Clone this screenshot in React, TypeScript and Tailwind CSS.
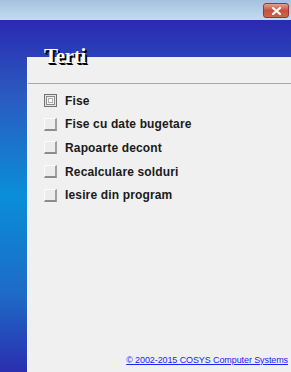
import React from "react";

const items = [
  "Fise",
  "Fise cu date bugetare",
  "Rapoarte decont",
  "Recalculare solduri",
  "Iesire din program",
];

function Box({ active }: { active?: boolean }) {
  if (active) {
    return (
      <div className="w-[13px] h-[13px] border border-[#707070] bg-[#e6e6e6] flex items-center justify-center">
        <div className="w-[9px] h-[9px] border border-[#8a8a8a] bg-[#f4f4f4] flex items-center justify-center">
          <div className="w-[5px] h-[5px] border border-[#b0b0b0] bg-[#fafafa]" />
        </div>
      </div>
    );
  }
  return (
    <div className="w-[13px] h-[13px] border-t border-l border-[#fcfcfc] border-b-2 border-r-2 border-b-[#8c8c8c] border-r-[#a0a0a0] bg-[#ececec]" />
  );
}

export default function App() {
  return (
    <div
      className="w-[291px] h-[372px] flex flex-col overflow-hidden"
      style={{ fontFamily: '"Liberation Sans", Arial, sans-serif' }}
    >
      <div className="h-[20px] bg-gradient-to-b from-[#a6c1de] to-[#c4dbf1] flex justify-end items-start pt-[3px] pr-[2px]">
        <div className="w-[26px] h-[15px] rounded-[3px] border border-[#8e3a30] bg-gradient-to-b from-[#e0a090] via-[#c9503d] to-[#c86450] flex items-center justify-center">
          <svg width="9" height="8" viewBox="0 0 9 8">
            <path d="M1 1 L8 7 M8 1 L1 7" stroke="#ffffff" strokeWidth="2.2" strokeLinecap="square" />
          </svg>
        </div>
      </div>
      <div className="flex-1 flex flex-col pt-[37px] pl-[27px] bg-[linear-gradient(to_bottom,#2a2ab2_0%,#2a5cc0_22%,#0a8ed8_50%,#1e6ac8_78%,#2a2eae_100%)]">
        <div className="flex-1 flex flex-col bg-[#f0f0f0] border-l border-[#f8f8f8]">
          <div className="h-[27px] border-b border-[#a8a8a8] pl-[16px]">
            <div
              className="-mt-[14px] text-[21px] font-bold text-white leading-[26px] tracking-[-0.3px]"
              style={{
                fontFamily: '"Liberation Serif", "Times New Roman", serif',
                textShadow: "1px 1px 0 #000, 2px 2px 0 #000",
              }}
            >
              Terti
            </div>
          </div>
          <div className="flex flex-col pt-[5px] pl-[16px]">
            {items.map((t, i) => (
              <div key={t} className="h-[23.6px] flex items-center gap-[8px]">
                <Box active={i === 0} />
                <span className="text-[12px] text-[#1a1a1a] font-bold tracking-[0.15px]">{t}</span>
              </div>
            ))}
          </div>
          <div className="flex-1" />
          <div className="flex justify-end pr-[3px] pb-[5px]">
            <span className="text-[9px] text-[#2020ff] underline tracking-[-0.1px]">
              © 2002-2015 COSYS Computer Systems
            </span>
          </div>
        </div>
      </div>
    </div>
  );
}
